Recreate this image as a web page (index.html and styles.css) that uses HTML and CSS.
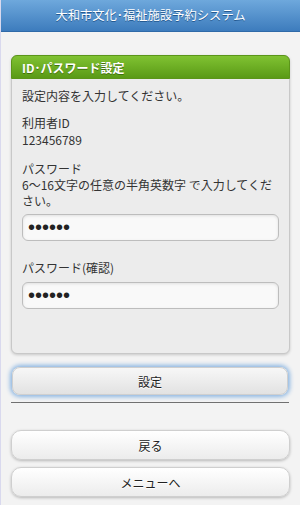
FILE: index.html
```html
<!DOCTYPE html>
<html lang="ja">
<head>
  <meta charset="UTF-8" />
  <meta name="viewport" content="width=device-width, initial-scale=1.0"/>
  <title>ID・パスワード設定</title>
  <link rel="stylesheet" href="styles.css">
</head>
<body>
  <!-- Header -->
  <div class="page-header">大和市文化･福祉施設予約システム</div>

  <div class="content">
    <!-- Settings card -->
    <div class="card">
      <div class="card-head">ID･パスワード設定</div>
      <div class="card-body">
        <p class="intro">設定内容を入力してください。</p>

        <div class="field">
          <div>利用者ID</div>
          <div>123456789</div>
        </div>

        <label class="label" for="pw">パスワード<br>6～16文字の任意の半角英数字 で入力してください。</label>
        <input class="text-input" id="pw" type="password" value="123456">

        <label class="label label-gap" for="pw2">パスワード(確認)</label>
        <input class="text-input" id="pw2" type="password" value="123456">
      </div>
    </div>

    <button class="btn btn-focus" type="button">設定</button>
    <hr class="divider">

    <div class="nav-buttons">
      <button class="btn" type="button">戻る</button>
      <button class="btn" type="button">メニューへ</button>
    </div>
  </div>
</body>
</html>
```

FILE: styles.css
```css
* {
  margin: 0;
  padding: 0;
  box-sizing: border-box;
}

body {
  font-family: "Noto Sans CJK JP", "Liberation Sans", sans-serif;
  font-size: 12px;
  color: #333;
  background: #f3f3f3;
  border-left: 1px solid #d9d9ee;
  min-height: 505px;
}

.page-header {
  height: 32px;
  line-height: 31px;
  text-align: center;
  color: #fff;
  font-size: 12.3px;
  background: linear-gradient(#6ea8dc, #3d7cbd);
  border-bottom: 1px solid #2f6aa8;
  text-shadow: 0 1px 0 #245a92;
}

.content {
  padding: 23px 10px 0;
}

.card {
  background: #ececec;
  border: 1px solid #c8c8c8;
  border-radius: 6px;
  box-shadow: 0 1px 3px rgba(0, 0, 0, 0.18);
  height: 299px;
}

.card-head {
  height: 24px;
  line-height: 24px;
  padding-left: 10px;
  margin: -1px -1px 0;
  color: #fff;
  font-weight: bold;
  background: linear-gradient(#80c232, #5a9a16);
  border: 1px solid #5b9519;
  border-radius: 6px 6px 0 0;
  text-shadow: 0 1px 0 #3f700e;
}

.card-body {
  padding: 9px 10px 0;
  line-height: 16px;
}

.intro {
  margin-bottom: 10px;
}

.field {
  margin-bottom: 13px;
  line-height: 17px;
}

.label {
  display: block;
  line-height: 16px;
}

.label-gap {
  margin-top: 19px;
  margin-bottom: 6px;
}

.text-input {
  display: block;
  width: 100%;
  height: 27px;
  margin-top: 5px;
  padding: 0 5px;
  font-family: "Liberation Sans", sans-serif;
  font-size: 20px;
  color: #222;
  background: #f9f9f9;
  border: 1px solid #bdbdbd;
  border-radius: 6px;
  box-shadow: inset 0 1px 3px rgba(0, 0, 0, 0.1);
  outline: none;
}

.label-gap + .text-input {
  margin-top: 0;
}

.btn {
  display: block;
  width: 100%;
  font-family: inherit;
  font-size: 12px;
  color: #222;
  background: linear-gradient(#ffffff, #ececec);
  border: 1px solid #cfcfcf;
  border-radius: 10px;
  box-shadow: 0 1px 3px rgba(0, 0, 0, 0.25);
  text-shadow: 0 1px 0 #fff;
}

.btn-focus {
  height: 28px;
  margin-top: 13px;
  margin-left: 1px;
  width: 276px;
  border-radius: 8px;
  background: linear-gradient(#f7f7f7, #e2e2e2);
  box-shadow: 0 0 4px 2px #8cb6e2;
}

.divider {
  border: none;
  border-top: 1px solid #707070;
  margin: 7px 1px 0 0;
}

.nav-buttons {
  display: flex;
  flex-direction: column;
  gap: 7px;
  margin-top: 27px;
}

.nav-buttons .btn {
  height: 30px;
}
```
